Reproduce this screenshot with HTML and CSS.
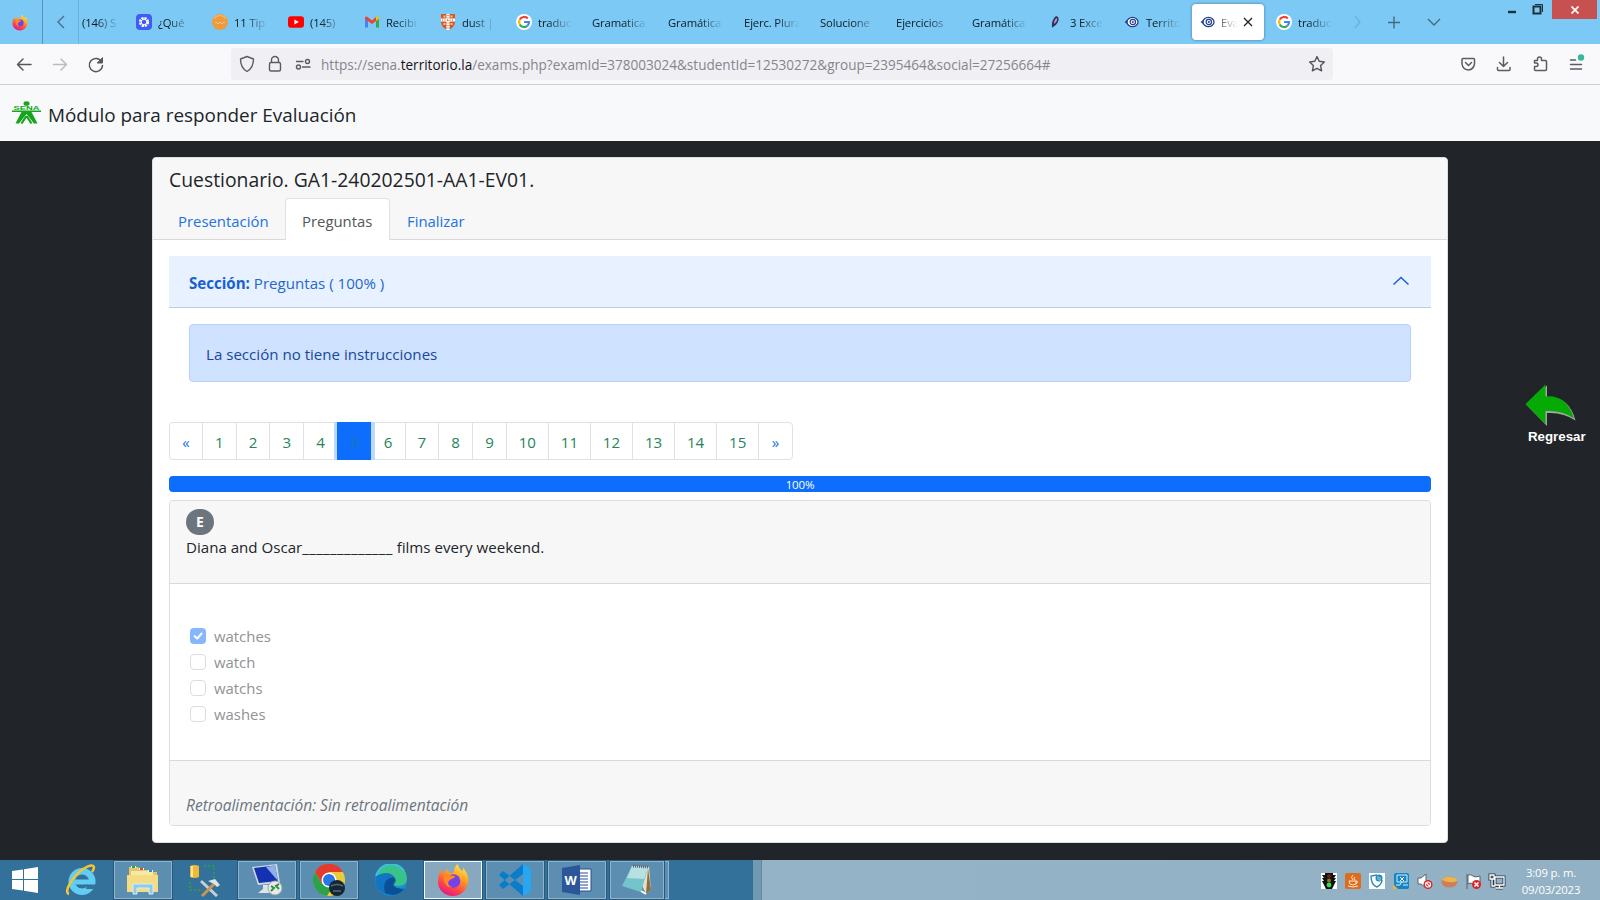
FILE: index.html
```html
<!DOCTYPE html>
<html lang="es">
<head>
<meta charset="utf-8">
<title>Evaluación</title>
<link rel="stylesheet" href="styles.css">
</head>
<body>
<svg class="defs" width="0" height="0">
  <defs>
    <symbol id="google" viewBox="0 0 16 16"><circle cx="8" cy="8" r="8" fill="#fff"/><g fill="none" stroke-width="2.2"><path d="M11.8 4.6A5 5 0 0 0 3.7 5.6" stroke="#ea4335"/><path d="M3.7 5.6a5 5 0 0 0 0 4.8" stroke="#fbbc05"/><path d="M3.7 10.4a5 5 0 0 0 7.8 1.3" stroke="#34a853"/><path d="M11.5 11.7A5 5 0 0 0 13 8H8" stroke="#4285f4"/></g></symbol>
    <symbol id="eye" viewBox="0 0 16 16"><path d="M0.5 8 5 4.500v7z" fill="#23408f"/><ellipse cx="8.500" cy="8" rx="5.500" ry="4.700" fill="#fff" stroke="#23408f" stroke-width="1.300"/><circle cx="8.800" cy="8" r="2.700" fill="none" stroke="#23408f" stroke-width="1.200"/><circle cx="8.800" cy="8" r="1" fill="#23408f"/></symbol>
    <symbol id="firefox" viewBox="0 0 32 32">
      <linearGradient id="fx" x1=".8" y1="0" x2=".3" y2="1"><stop offset="0" stop-color="#fff044"/><stop offset=".4" stop-color="#ff9a26"/><stop offset=".7" stop-color="#ff4b45"/><stop offset="1" stop-color="#e31587"/></linearGradient>
      <path d="M4 6c1 1 2 2 3 3 1-2 2-3 4-4 0 2 1 3 2 4 2 0 3 0 4-1 0-4 1-6 4-8 0 3 2 5 4 7 1-1 1-2 1-3 4 4 6 9 5 14-1 8-7 14-15 14S1 26 1 18c0-5 1-9 3-12z" fill="url(#fx)"/>
      <circle cx="16.5" cy="17" r="6.800" fill="#7542e5"/><path d="M7 12c4-2 7 0 11 0 0 3-4 2-6 5-2 2 0 5 3 6-6 1-9-5-8-11z" fill="#ff8a25"/></symbol>
  </defs>
</svg>

<header class="tabstrip">
  <div class="fx-home"><svg width="16" height="17"><use href="#firefox"/></svg></div>
  <div class="scroll-left"><svg width="10" height="14" viewBox="0 0 10 14"><path d="M8 1 2 7l6 6" fill="none" stroke="#47708a" stroke-width="1.4"/></svg></div>
  <div class="tab tab-cut"><span>(146) S</span></div>
  <div class="tab"><svg width="16" height="16" viewBox="0 0 16 16"><rect width="16" height="16" rx="4" fill="#3f5cf5"/><circle cx="8" cy="8" r="4" fill="none" stroke="#fff" stroke-width="2.2" stroke-dasharray="2.2 .94"/><circle cx="8" cy="8" r="2.8" fill="none" stroke="#fff"/></svg><span>¿Qué</span></div>
  <div class="tab"><svg width="16" height="16" viewBox="0 0 16 16"><circle cx="8" cy="8" r="8" fill="#ee9b3d"/><path d="M2 5a7 7 0 0 1 12 0" stroke="#f4b368" fill="none" stroke-width="1.5"/><path d="M3 9q1-2 2 0t2 0 2 0 2 0 2 0" stroke="#f8cd97" fill="none" stroke-width=".8"/></svg><span>11 Tip</span></div>
  <div class="tab"><svg width="16" height="16" viewBox="0 0 16 16"><rect y="2.2" width="16" height="11.6" rx="3" fill="#f00"/><path d="M6.4 5.5v5L10.8 8z" fill="#fff"/></svg><span>(145)</span></div>
  <div class="tab"><svg width="16" height="16" viewBox="0 0 16 16"><path d="M1 13.5V4l3 2v7.500z" fill="#4285f4"/><path d="M12 13.500V6l3-2v9.500z" fill="#34a853"/><path d="M1 4.500v-1q1-1.500 2.500-.5L8 6.500 12 3v4L8 10 1 5z" fill="#ea4335"/><path d="M12 3q2-1.500 3 .5v1.500L12 7z" fill="#fbbc04"/></svg><span>Recibi</span></div>
  <div class="tab"><svg width="16" height="16" viewBox="0 0 16 16"><path d="M1 0h14v8q0 5-7 8-7-3-7-8z" fill="#d8552e"/><path d="M8 0v16M1 6h14" stroke="#fff" stroke-width="3"/><path d="M8 1v14M2 6h12" stroke="#a8432e" stroke-dasharray="1 1.500"/><path d="M3.500 2.500h2M10.500 2.500h2M3.500 10h2M10.500 10h2" stroke="#ffd04f" stroke-width="1.800"/></svg><span>dust |</span></div>
  <div class="tab"><svg width="16" height="16"><use href="#google"/></svg><span>traduc</span></div>
  <div class="tab"><span>Gramatica</span></div>
  <div class="tab"><span>Gramática</span></div>
  <div class="tab"><span>Ejerc. Plura</span></div>
  <div class="tab"><span>Solucione</span></div>
  <div class="tab"><span>Ejercicios</span></div>
  <div class="tab"><span>Gramática</span></div>
  <div class="tab tab-feather"><svg width="16" height="16" viewBox="0 0 16 16"><path d="M4 14Q3 6 8 2q4 1 2 6-2 4-5 5z" fill="#273469"/><path d="M6 10q0-5 3-6 1 3-3 6z" fill="#d7899f"/></svg><span>3 Exce</span></div>
  <div class="tab"><svg width="16" height="16"><use href="#eye"/></svg><span>Territo</span></div>
  <div class="tab tab-active"><svg width="16" height="16"><use href="#eye"/></svg><span>Eva</span><svg class="tab-x" width="10" height="10" viewBox="0 0 10 10"><path d="m1 1 8 8M9 1 1 9" stroke="#222" stroke-width="1.300"/></svg></div>
  <div class="tab"><svg width="16" height="16"><use href="#google"/></svg><span>traduc</span></div>
  <svg class="strip-tools" width="110" height="44" viewBox="0 0 110 44" fill="none" stroke-width="1.400"><path d="m11 16 5 6-5 6" stroke="#65b4e2"/><path d="M44 22.500h12M50 16.500v12" stroke="#426b82"/><path d="m84 19 6 6 6-6" stroke="#426b82"/></svg>
  <div class="window-buttons">
    <svg width="50" height="19" viewBox="0 0 50 19" fill="none" stroke="#1d303c"><path d="M6 12h8" stroke-width="2.400"/><path d="M31.500 6.500h7v7h-7z" stroke-width="2"/><path d="M33 4.500h7.500V12"/></svg>
    <div class="win-close"><svg width="8" height="8" viewBox="0 0 8 8"><path d="m.5.5 7 7M7.500.5l-7 7" stroke="#fff" stroke-width="1.700"/></svg></div>
  </div>
</header>

<nav class="toolbar">
  <svg class="nav-icons" width="110" height="40" viewBox="0 0 110 40" fill="none" stroke-width="1.500" stroke-linecap="round" stroke-linejoin="round"><path d="M17.500 20.500H31M23 15l-5.500 5.500L23 26" stroke="#55555e"/><path d="M53.500 20.500H66.500M61 15l5.500 5.500L61 26" stroke="#bbbbc2"/><path d="M101.500 17.500a6.600 6.600 0 1 0 1 4" stroke="#55555e"/><path d="M102.500 14v5h-5z" fill="#55555e" stroke="#55555e" stroke-width="1"/></svg>
  <div class="urlbar">
    <svg width="90" height="32" viewBox="0 0 90 32" fill="none" stroke="#5b5b66" stroke-width="1.400" stroke-linejoin="round"><path d="m16 8.500 6.500 2.500c0 6-2 10-6.500 12.500C11.500 21 9.500 17 9.500 11z"/><rect x="38.500" y="14.500" width="11" height="8.500" rx="1.500"/><path d="M40.500 14.500v-2.500a3.500 3.500 0 0 1 7 0v2.500"/><path d="M65 13.500h7.500M71 19h8.500"/><circle cx="76.500" cy="13.500" r="2"/><circle cx="67.500" cy="19" r="2"/></svg>
    <span class="url">https://sena.<b>territorio.la</b>/exams.php?examId=378003024&amp;studentId=12530272&amp;group=2395464&amp;social=27256664#</span>
    <svg class="star" width="18" height="18" viewBox="0 0 18 18"><path d="m9 1.600 2.200 4.700 5.200.7-3.800 3.600 1 5.200L9 13.300l-4.600 2.500 1-5.200L1.600 7l5.200-.7z" fill="none" stroke="#55555e" stroke-width="1.400" stroke-linejoin="round"/></svg>
  </div>
  <svg class="tool-icons" width="140" height="40" viewBox="0 0 140 40" fill="none" stroke="#5b5b66" stroke-width="1.500" stroke-linecap="round" stroke-linejoin="round"><path d="M3 14.500h10.500q1 0 1 1V20q-1 5.500-6.200 6-5.500-.5-6.300-6v-4.500q0-1 1-1zM5.500 18.500l3 3 3-3"/><path d="M43.500 13v9.500M39.500 18.500l4 4 4-4M37.500 23.500v2q0 1 1 1h10.500q1 0 1-1v-2"/><path d="M74.500 16.500h3v-1.500q0-2 2-2t2 2v1.500h4q1 0 1 1v8q0 1-1 1h-10q-1 0-1-1v-3h1.500q2 0 2-1.700t-2-1.700h-1.500z"/><path d="M110.500 16h5M110.500 20.500h11M110.500 25h11"/><circle cx="121" cy="13.500" r="3.200" fill="#36b89b" stroke="none"/></svg>
</nav>

<div class="app-header">
  <svg class="sena" width="29" height="24" viewBox="0 0 29 24"><g fill="#14a51a"><ellipse cx="14.500" cy="2.500" rx="3" ry="2.300"/><path d="M0 9.500h29v1.500H19.500l6 11.500H22l-7.500-9.500L7 22.500H3.500L9.500 11H0z"/></g><path d="m14.500 15-5 7.500M14.500 15l5 7.500" stroke="#14a51a" stroke-width="2.200"/><text x="14.500" y="9" class="sena-word" text-anchor="middle" textLength="26" lengthAdjust="spacingAndGlyphs">SENA</text></svg>
  <span class="app-title">Módulo para responder Evaluación</span>
</div>

<main class="stage">
  <section class="card">
    <div class="card-header">
      <h1 class="card-title">Cuestionario. GA1-240202501-AA1-EV01.</h1>
      <div class="nav-tabs">
        <a class="nav-link link-pres">Presentación</a>
        <a class="nav-link link-active">Preguntas</a>
        <a class="nav-link link-fin">Finalizar</a>
      </div>
    </div>
    <div class="card-body">
      <div class="accordion-button"><span class="acc-text"><b>Sección:</b> Preguntas ( 100% )</span>
        <svg width="18" height="10" viewBox="0 0 18 10"><path d="m1.500 8.500 7.500-7 7.500 7" fill="none" stroke="#1f63cf" stroke-width="1.600"/></svg></div>
      <div class="alert"><span>La sección no tiene instrucciones</span></div>
      <div class="pagination">
        <a class="arrow">«</a><a>1</a><a>2</a><a>3</a><a>4</a><a class="current">5</a><a>6</a><a>7</a><a>8</a><a>9</a><a class="wide">10</a><a class="wide">11</a><a class="wide">12</a><a class="wide">13</a><a class="wide">14</a><a class="wide">15</a><a class="arrow">»</a>
      </div>
      <div class="progress"><span>100%</span></div>
      <div class="question">
        <div class="question-head"><span class="badge">E</span><p class="question-text">Diana and Oscar<span class="blank">_____________</span> films every weekend.</p></div>
        <div class="question-body">
          <div class="option"><i class="box checked"><svg width="16" height="16" viewBox="0 0 16 16"><path d="m4.700 8.200 2.500 2.400 4.300-5" fill="none" stroke="#fff" stroke-width="2.100" stroke-linecap="round" stroke-linejoin="round"/></svg></i><span>watches</span></div>
          <div class="option"><i class="box"></i><span>watch</span></div>
          <div class="option"><i class="box"></i><span>watchs</span></div>
          <div class="option"><i class="box"></i><span>washes</span></div>
        </div>
        <div class="question-foot"><em>Retroalimentación: Sin retroalimentación</em></div>
      </div>
    </div>
  </section>
  <aside class="back">
    <svg width="52" height="43" viewBox="0 0 52 43"><path d="M1.500 21 22 1.500V13q22-1 28.500 23.500Q38 28 22 29v13z" fill="#a0a8a0"/><path d="M.5 20 20.500.5V12.500q21-2 28.500 22Q38 26 20.500 27v13z" fill="#05aa05"/></svg>
    <span>Regresar</span>
  </aside>
</main>

<footer class="taskbar">
  <div class="task start"><svg width="28" height="26" viewBox="0 0 28 26" fill="#fff"><path d="M1 4 12 2.500V12H1zM13 2.300 27 0v12H13zM1 13h11v10.500L1 22zM13 13h14v13l-14-2.200z"/></svg></div>
  <div class="task plain"><svg width="32" height="32" viewBox="0 0 32 32"><circle cx="17" cy="17.500" r="10.300" fill="none" stroke="#62cdf3" stroke-width="6.500"/><path d="M10 18h20" stroke="#62cdf3" stroke-width="5"/><path d="M22 20.500h12v4.500H21z" fill="#33719b"/><path d="M4 30C-2 28 8 12 18 5q10-6 11-2 0 2-2 5" fill="none" stroke="#f6c62f" stroke-width="2.500"/></svg></div>
  <div class="task open"><svg width="34" height="30" viewBox="0 0 34 30"><path d="M3 2h9l2 3h8l2 2h7v19H3z" fill="#e5c765"/><path d="M5 6h22v20H5z" fill="#f7e9a5"/><path d="M1 10h31v17H1z" fill="#f3dc83"/><path d="M5 2h5M13 4h5M22 6h5" stroke="#fff" stroke-width="2"/><path d="M6 2h3" stroke="#2aa83f" stroke-width="2"/><path d="M14 4h3" stroke="#d74a30" stroke-width="2"/><path d="M23 6h3" stroke="#2c8fc1" stroke-width="2"/><path d="M7 29V19h20v10h-4v-6H11v6z" fill="#8ecbe9" stroke="#d2effa"/></svg></div>
  <div class="task plain"><svg width="32" height="33" viewBox="0 0 32 33"><path d="M1 2q5-2 9 0v11q-4 2-9 0z" fill="#efb837"/><path d="M3 2v11" stroke="#ffe89a" stroke-width="2"/><path d="M15 2h10v12M1 18v8h13" fill="none" stroke="#2b9b47" stroke-width="2" stroke-dasharray="2 2"/><path d="m12 17 16 15" stroke="#c9ced2" stroke-width="3"/><path d="m25 20-12 12" stroke="#c79451" stroke-width="3"/><path d="m19 17 7-2 5 6-3 2-3-3" fill="#dee3e8"/></svg></div>
  <div class="task open"><svg width="34" height="34" viewBox="0 0 34 34"><path d="m2 4 25-3 3 19-22 2z" fill="#cdd8df"/><path d="m4 5 21-2.500L28 18 9 20z" fill="#1431b4"/><path d="m16 4 9-1.500L28 18z" fill="#8fb0e9"/><path d="M13 22h7v5l5 3H8l5-4z" fill="#dfe4e7"/><circle cx="25" cy="25" r="7" fill="#e7eae9" stroke="#9da5a5"/><path d="m21 23 3 2-3 3M29 21l-3 2 3 3" fill="none" stroke="#2e9242" stroke-width="2"/></svg></div>
  <div class="task open"><svg width="32" height="32" viewBox="0 0 32 32"><circle cx="16" cy="16" r="16" fill="#e9cc3a"/><path d="M2 8a16 16 0 0 1 28 0H16l-7 12z" fill="#e33b2e"/><path d="M2 8a16 16 0 0 0 12 24l7-12H9z" fill="#2ba24c"/><circle cx="16" cy="16" r="7.500" fill="#fff"/><circle cx="16" cy="16" r="6" fill="#2876e8"/><circle cx="24" cy="24" r="8" fill="#172632"/><path d="M18 22q6-3 12 0M20 27h8" stroke="#4c7181" stroke-width="1.500" fill="none"/></svg></div>
  <div class="task plain"><svg width="32" height="32" viewBox="0 0 32 32"><circle cx="16" cy="16" r="16" fill="#1790d6"/><path d="M1 12Q4 0 17 0q14 2 15 14 0 8-9 8-5 0-5-3 3-2 1-6Q14 7 1 12z" fill="#39c38b"/><path d="M1 12Q14 5 20 14q2 4-1 6-1 5 10 5Q20 35 10 30-2 25 1 12z" fill="#1275c4"/><path d="M10 29Q7 17 15 14q6-2 5 3-6 7 9 8-7 9-19 4z" fill="#0d4f94"/><path d="M1 12Q5 0 17 0q8 1 12 7" fill="none" stroke="#3dbfe0" stroke-width="2"/></svg></div>
  <div class="task open focused"><svg width="32" height="32"><use href="#firefox"/></svg></div>
  <div class="task open"><svg width="32" height="32" viewBox="0 0 32 32"><path d="M24 0v10L4 25l-4-4zM24 32V22L4 7l-4 4z" fill="#087dcc"/><path d="m24 0 8 4v24l-8 4z" fill="#29a6ef"/></svg></div>
  <div class="task open"><svg width="32" height="32" viewBox="0 0 32 32"><path d="M17 5h13v22H17z" fill="#fff" stroke="#294f94"/><path d="M19 9h8M19 12h8M19 15h8M19 18h8M19 21h8M19 24h8" stroke="#294f94"/><path d="M1 4 19 1v30L1 28z" fill="#2b579a"/><text x="3.500" y="21" class="word">W</text></svg></div>
  <div class="task open note"><svg width="32" height="32" viewBox="0 0 32 32"><path d="m12 2 16 1 2 23-5 4z" fill="#e6dfc6"/><path d="m27 4 3 22-5 4z" fill="#8e6f42"/><path d="m11 2 16 2-7 24L1 22z" fill="#74c4cc"/><path d="m11 2 16 2-4 11L6 14z" fill="#b6e0e2"/><path d="m12 2 15 1" stroke="#606b6d" stroke-width="3" stroke-dasharray="1 1"/><path d="m20 27 5 3" stroke="#fff" stroke-width="2"/></svg></div>
  <div class="stack"></div>
  <div class="tray">
    <svg width="190" height="18" viewBox="0 0 190 18">
      <g><path d="M0 1h16v16H0z" fill="#fff"/><path d="M1 3h3V1h8v2h3l-2 3h2l-2 3h2l-2 4-2 4H5l-2-4-2-4h2L1 6h2z" fill="#111"/><circle cx="8" cy="4" r="2" fill="#731b15"/><circle cx="8" cy="8.500" r="2" fill="#8a7520"/><circle cx="8" cy="13" r="2.400" fill="#2fe04a"/></g>
      <g transform="translate(24 1)"><rect width="16" height="16" rx="2" fill="#dd6c1d"/><path d="M8 2q-3 2 0 5M10 4q-2 1 0 3M4 8h7v3q-3 2-6 0zM11 8q3 0 0 3M3 13q5 2 10 0" fill="none" stroke="#ffe9d4"/></g>
      <g transform="translate(48 1)"><rect width="16" height="16" fill="#fff"/><path d="M8 2 2 3q0 9 6 11 5-3 5-7" fill="none" stroke="#218bb6" stroke-width="1.400"/><circle cx="10" cy="5" r="3.500" fill="#218bb6"/><path d="M9 3v4M11 4v4" stroke="#fff" stroke-width=".6"/></g>
      <g transform="translate(72 1)"><rect x="1" width="15" height="16" rx="2" fill="#1584c6"/><path d="M4 2h10v7H4zM3 12h4l2-4M10 12h5" fill="none" stroke="#d5f2fc"/><path d="m7 4 4 4M11 4 7 8" stroke="#fff"/><path d="m0 11 5 5H0z" fill="#e8b23b"/></g>
      <g transform="translate(96 1)"><path d="M1 5h3l5-4v14l-5-4H1z" fill="#fff" stroke="#59666e"/><circle cx="11" cy="11.500" r="4.500" fill="#d7262c"/><circle cx="11" cy="11.500" r="2.500" fill="none" stroke="#fff" stroke-width="1.200"/><path d="m9 9.500 4 4" stroke="#fff" stroke-width="1.300"/></g>
      <g transform="translate(120 1)"><ellipse cx="8.500" cy="9" rx="8" ry="5.500" fill="#ca805b"/><path d="M1 7q2-4 10-3 6 1 5 4-6 3-15-1z" fill="#efb348"/></g>
      <g transform="translate(144 1)"><path d="M2 1v15M3 2q3-1 5 1t7 0v8q-4 2-7 0t-5 0z" fill="#fff" stroke="#56636b"/><circle cx="11.500" cy="11.500" r="4.500" fill="#d7262c"/><path d="m9.500 9.500 4 4M13.500 9.500l-4 4" stroke="#fff" stroke-width="1.500"/></g>
      <g transform="translate(168 1)" fill="none"><path d="M6 4h9v8H6zM7 15h7M10.500 12v3M3 6v7h3M1 2h4v4H1z" stroke="#2a3b47" stroke-width="3"/><path d="M6 4h9v8H6zM7 15h7M10.500 12v3M3 6v7h3M1 2h4v4H1z" stroke="#fff" stroke-width="1.300"/></g>
    </svg>
    <div class="clock"><span>3:09 p. m.</span><span class="date">09/03/2023</span></div>
  </div>
</footer>
</body>
</html>
```
FILE: styles.css
```css
* { box-sizing: border-box; }
body { margin: 0; width: 1600px; height: 900px; overflow: hidden; display: flex; flex-direction: column; font-family: "Open Sans", "Noto Sans", sans-serif; font-size: 15.100px; line-height: 24px; color: #212529; background: #212529; }
svg { display: block; flex: none; }
.defs { position: absolute; }

/* Browser tab strip */
.tabstrip { position: relative; display: flex; height: 44px; flex: none; background: #7dc9f5; font-size: 11.300px; color: #0c1a23; }
.fx-home { width: 43px; padding: 14px 0 0 12px; border-right: 1px solid #5794b6; }
.scroll-left { width: 36px; padding: 15px 0 0 13px; border-right: 1px solid #69b3dd; }
.tab { display: flex; align-items: center; width: 76px; padding: 0 12px 0 8px; gap: 6px; flex: none; }
.tab span { flex: 1; min-width: 0; white-space: nowrap; letter-spacing: -0.15px; line-height: 20px; padding-top: 1px; -webkit-mask-image: linear-gradient(to left, transparent, #000 24px); mask-image: linear-gradient(to left, transparent, #000 24px); }
.tab-cut { width: 49px; padding-left: 3px; padding-right: 8px; }
.tab-active { width: 72px; height: 36px; margin: 4px 4px 0 0; padding: 0 11px 0 8px; gap: 5px; background: #fff; border-radius: 4px; box-shadow: 0 0 3px #44718c; }
.tab-active span { padding-top: 1px; }
.strip-tools { flex: none; }
.window-buttons { display: flex; margin-left: auto; padding-right: 3px; }
.win-close { width: 45px; height: 19px; background: #c75050; display: flex; align-items: center; justify-content: center; }

/* Address toolbar */
.toolbar { height: 41px; flex: none; display: flex; background: #f9f9fb; border-bottom: 1px solid #ccccd1; }
.nav-icons { margin-right: 121px; }
.urlbar { width: 1102px; height: 32px; margin-top: 4px; display: flex; align-items: center; background: #f0f0f4; border-radius: 4px; }
.url { flex: 1; font-size: 13.550px; padding-top: 2px; color: #85858c; white-space: nowrap; }
.url b { color: #15141a; font-weight: 400; }
.star { margin-right: 7px; }
.tool-icons { margin-left: 127px; }

/* Page heading */
.app-header { height: 56px; flex: none; display: flex; padding: 16px 0 0 12px; background: #f8f9fb; }
.sena { margin-right: 7px; }
.sena-word { font: bold 5.500px "Liberation Sans", sans-serif; fill: #14a51a; }
.app-title { font-size: 18.900px; line-height: 28px; white-space: nowrap; }

.stage { height: 719px; flex: none; display: flex; padding: 16px 0 0 152px; }
.card { width: 1296px; height: 686px; flex: none; background: #fff; border: 1px solid #dcdddd; border-radius: 4px; overflow: hidden; }
.card-header { height: 82px; padding: 7px 16px 0; background: #f7f7f7; border-bottom: 1px solid #d9d9d9; }
.card-title { margin: 0; font-size: 19.350px; line-height: 30px; font-weight: 400; height: 33px; white-space: nowrap; }
.nav-tabs { display: flex; height: 42px; margin-left: -8px; }
.nav-link { color: #2272e4; height: 42px; padding: 11px 0 0 17px; font-size: 14.900px; white-space: nowrap; }
.link-pres { width: 124px; }
.link-active { width: 105px; padding-left: 16px; color: #53575b; background: #fff; border: 1px solid #dee2e6; border-bottom: 0; border-radius: 4px 4px 0 0; padding-top: 10px; }
.card-body { padding: 16px; }
.accordion-button { height: 52px; display: flex; align-items: center; justify-content: space-between; padding: 2px 21px 0 20px; background: #e7f1ff; border-bottom: 1px solid #bfcfe2; color: #2468cb; }
.accordion-button svg { margin-bottom: 3px; }
.acc-text b { color: #1760d2; }
.alert { height: 58px; margin: 16px 20px 40px; padding: 17px 16px; background: #cfe2ff; border: 1px solid #b6d1fa; border-radius: 4px; color: #17489a; }

.pagination { display: flex; width: 624px; height: 38px; border: 1px solid #dee2e6; border-radius: 4px; color: #25845a; }
.pagination a { flex: 33.700 0 0; padding-top: 7px; text-align: center; border-left: 1px solid #dee2e6; }
.pagination a:first-child { border-left: 0; flex-grow: 32.700; }
.pagination .wide { flex-grow: 42.200; }
.pagination .arrow { color: #2272e4; }
.pagination .current { height: 38px; margin-top: -1px; padding-top: 8px; background: #0d6efd; border-color: #0d6efd; color: #1779a4; box-shadow: -3px 0 #bddafe, 4px 0 #bddafe; position: relative; }

.progress { height: 16px; margin: 16px 0 8px; background: #0d6efd; border-radius: 4px; color: #fff; text-align: center; font-size: 11.500px; line-height: 17px; letter-spacing: -0.15px; }
.question { height: 326px; border: 1px solid #dcdddd; border-radius: 4px; overflow: hidden; }
.question-head { height: 83px; padding: 8px 16px; background: #f7f7f7; border-bottom: 1px solid #d9d9d9; }
.badge { display: block; width: 28px; height: 26px; border-radius: 13px; background: #6c757d; color: #fff; text-align: center; font-weight: 700; font-size: 14px; line-height: 26px; }
.question-text { margin: 0; white-space: nowrap; }
.blank { letter-spacing: 0.35px; }
.question-body { height: 177px; padding: 39px 20px; border-bottom: 1px solid #d9d9d9; }
.option { display: flex; align-items: center; gap: 8px; height: 26px; color: #909294; font-size: 14.900px; }
.box { width: 16px; height: 16px; border: 1px solid #dcdde0; border-radius: 4px; margin-bottom: 1px; }
.box.checked { border: 0; background: #86b7fe; }
.question-foot { height: 66px; padding: 32px 16px 0; background: #f7f7f7; color: #6c757d; font-size: 15.550px; }

.back { margin: 227px 0 0 77px; color: #fff; font: bold 13.300px/18px "Liberation Sans", sans-serif; }
.back span { display: block; margin: 1px 0 0 3px; }

/* Windows taskbar */
.taskbar { height: 40px; flex: none; display: flex; align-items: flex-start; padding-top: 1px; background: #33719b; }
.task { width: 58px; height: 38px; margin-right: 4px; display: flex; align-items: center; justify-content: center; flex: none; }
.start { width: 50px; margin-right: 2px; }
.open { background: #5b8eb0; border: 1px solid #8fb4cc; box-shadow: 0 0 0 1px #27597b; }
.focused { background: #87a8bf; border: 1px solid #f3f8fb; }
.note { width: 54px; margin-right: 1px; }
.stack { width: 4px; height: 38px; background: #5b8eb0; border: 1px solid #8fb4cc; border-left: 0; }
.tray { margin: -1px 0 0 auto; width: 847px; height: 40px; display: flex; background: linear-gradient(90deg, #7399b2 0, #7399b2 8px, #5f88a4 8px, #5f88a4 9px, #95b3c7 9px, #93b1c5 100%); padding: 12px 0 0 568px; }
.clock { margin-top: -8px; width: 80px; display: flex; flex-direction: column; align-items: center; color: #fff; font-size: 11.300px; line-height: 17px; letter-spacing: -0.15px; white-space: nowrap; }
.word { font: bold 13px "Liberation Sans", sans-serif; fill: #fff; }
```
